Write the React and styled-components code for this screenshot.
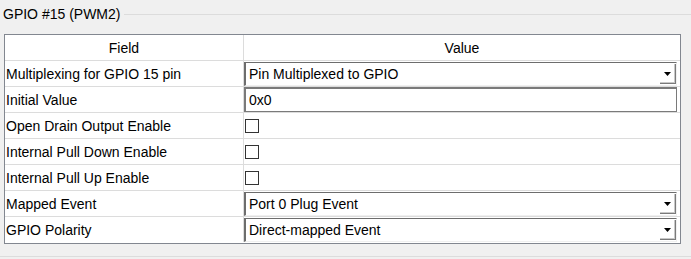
import React from "react";
import styled, { createGlobalStyle } from "styled-components";

const Global = createGlobalStyle`
  html, body { margin: 0; padding: 0; background: #f0f0f0; }
  body { font-family: "Liberation Sans", Arial, sans-serif; font-size: 14px; color: #000; }
  * { box-sizing: border-box; }
`;

const Page = styled.div`
  width: 691px;
  height: 259px;
  background: #f0f0f0;
  padding-top: 6px;
`;

const GroupHeader = styled.div`
  display: flex;
  align-items: center;
  height: 16px;
  padding-left: 3px;
`;

const GroupTitle = styled.span`
  font-size: 14px;
  line-height: 16px;
  white-space: nowrap;
`;

const GroupLine = styled.div`
  flex: 1;
  height: 1px;
  margin-left: 4px;
  margin-top: 1px;
  background: #dcdcdc;
`;

const Table = styled.div`
  margin: 12px 0 0 4px;
  width: 677px;
  border: 1px solid #828790;
  background: #fff;
  display: grid;
  grid-template-columns: 238px 1px 436px;
`;

const Cell = styled.div`
  height: 25px;
  display: flex;
  align-items: center;
  justify-content: ${(p) => (p.$center ? "center" : "flex-start")};
  padding-left: ${(p) => (p.$center ? "0" : "1px")};
  white-space: nowrap;
  font-size: 14px;
`;

const ValueCell = styled.div`
  height: 25px;
  display: flex;
  align-items: center;
  padding-right: 3px;
`;

const VDivider = styled.div`
  background: #dcdcdc;
`;

const HLine = styled.div`
  grid-column: 1 / -1;
  height: 1px;
  background: ${(p) => (p.$last ? "#fff" : "#dcdcdc")};
`;

const Combo = styled.div`
  flex: 1;
  height: 24px;
  margin-top: 1px;
  display: flex;
  align-items: center;
  border-top: 1px solid #6d6d6d;
  border-left: 2px solid #6d6d6d;
  border-bottom: 1px solid #f0f0f0;
  border-right: 1px solid #f0f0f0;
  padding-left: 3px;
  position: relative;
`;

const ComboText = styled.span`
  flex: 1;
  font-size: 14px;
`;

const DropButton = styled.div`
  width: 16px;
  height: 20px;
  margin-right: 0px;
  display: flex;
  align-items: center;
  justify-content: center;
  background: #fff;
  border-right: 1px solid #7a7a7a;
  border-bottom: 1px solid #7a7a7a;
  box-shadow: inset -1px -1px 0 #c8c8c8;
`;

const TextBox = styled.div`
  flex: 1;
  height: 25px;
  display: flex;
  align-items: center;
  border: 1px solid #7a7a7a;
  border-top-width: 2px;
  border-left-width: 2px;
  padding-left: 3px;
  font-size: 14px;
`;

const Check = styled.div`
  width: 14px;
  height: 14px;
  margin-left: 1px;
  border: 1px solid #333;
  background: #fff;
`;

const GroupBottom = styled.div`
  margin-top: 12px;
  height: 1px;
  background: #dcdcdc;
`;

const Arrow = () => (
  <svg width="7" height="4" viewBox="0 0 7 4">
    <polygon points="0,0 7,0 3.5,4" fill="#000" />
  </svg>
);

const rows = [
  { label: "Multiplexing for GPIO 15 pin", type: "combo", value: "Pin Multiplexed to GPIO" },
  { label: "Initial Value", type: "text", value: "0x0" },
  { label: "Open Drain Output Enable", type: "check" },
  { label: "Internal Pull Down Enable", type: "check" },
  { label: "Internal Pull Up Enable", type: "check" },
  { label: "Mapped Event", type: "combo", value: "Port 0 Plug Event" },
  { label: "GPIO Polarity", type: "combo", value: "Direct-mapped Event" },
];

function Value({ row }) {
  if (row.type === "combo")
    return (
      <Combo>
        <ComboText>{row.value}</ComboText>
        <DropButton>
          <Arrow />
        </DropButton>
      </Combo>
    );
  if (row.type === "text") return <TextBox>{row.value}</TextBox>;
  return <Check />;
}

export default function App() {
  return (
    <Page>
      <Global />
      <GroupHeader>
        <GroupTitle>GPIO #15 (PWM2)</GroupTitle>
        <GroupLine />
      </GroupHeader>
      <Table>
        <Cell $center>Field</Cell>
        <VDivider />
        <Cell $center>Value</Cell>
        <HLine />
        {rows.map((r, i) => (
          <React.Fragment key={r.label}>
            <Cell>{r.label}</Cell>
            <VDivider />
            <ValueCell>
              <Value row={r} />
            </ValueCell>
            <HLine $last={i === rows.length - 1} />
          </React.Fragment>
        ))}
      </Table>
      <GroupBottom />
    </Page>
  );
}
